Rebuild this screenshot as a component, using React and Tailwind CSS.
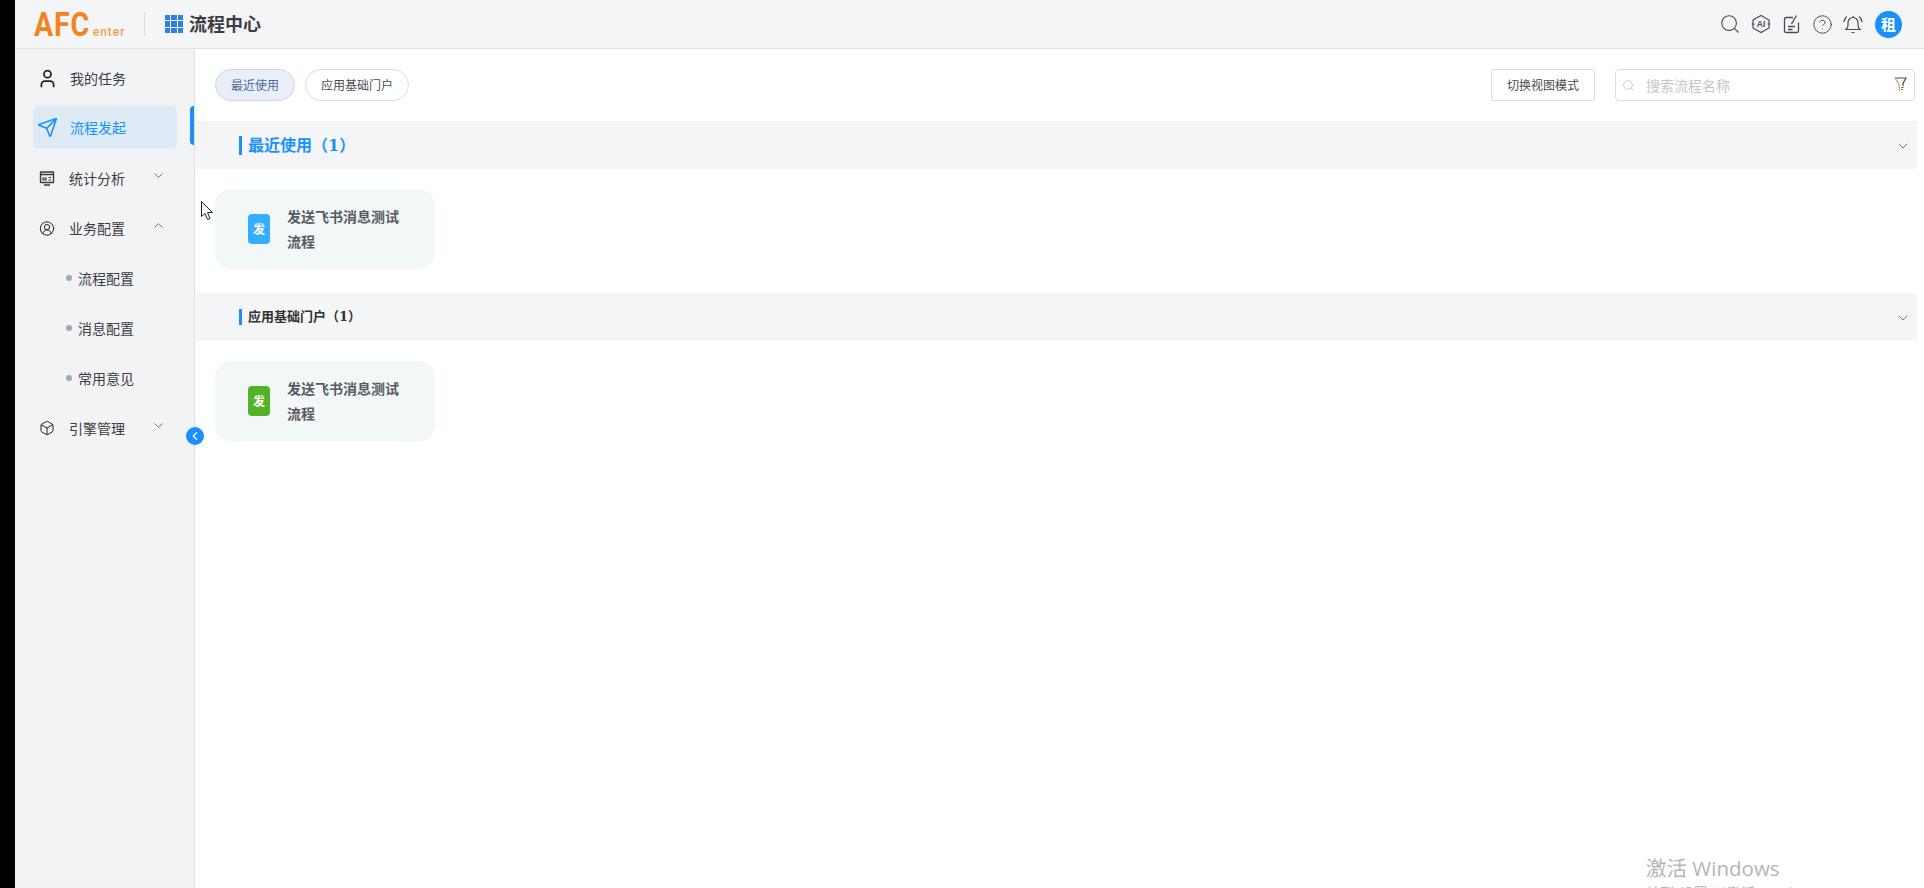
import React from 'react';
import { ChevronDown, ChevronUp, ChevronLeft, User, Send, CircleUserRound, Box, Search, CircleHelp } from 'lucide-react';

const navItems = [
  { label: '统计分析', icon: 'stats', chevron: 'down' },
  { label: '业务配置', icon: 'user', chevron: 'up' },
];

const subItems = ['流程配置', '消息配置', '常用意见'];

const StatsIcon = () => (
  <svg width="16" height="16" viewBox="0 0 16 16" fill="none" stroke="#3a3a3a" strokeWidth="1.4">
    <rect x="1.500" y="2" width="13" height="10.500" rx="0.500" />
    <path d="M1 4.500h14M5 15h6" />
    <path d="M4 8h3v2H4zM9.500 7.500h2.500M9.500 10h2.500" strokeWidth="1.200" />
  </svg>
);

const AiIcon = () => (
  <svg width="22" height="22" viewBox="0 0 22 22" fill="none" stroke="#4b4b55" strokeWidth="1.200">
    <path d="M3 7 11 2.500 19 7v8l-8 4.500L3 15z" />
    <path d="M1.500 11h3M17.500 11h3" />
    <text x="11" y="14" textAnchor="middle" fontSize="8.500" fontWeight="700" fill="#4b4b55" stroke="none" fontFamily="Liberation Sans">AI</text>
  </svg>
);

const NoteIcon = () => (
  <svg width="22" height="22" viewBox="0 0 22 22" fill="none" stroke="#4b4b55" strokeWidth="1.300">
    <path d="M12 4.500H5a1.500 1.500 0 0 0-1.500 1.500v12A1.500 1.500 0 0 0 5 19.500h11a1.500 1.500 0 0 0 1.500-1.500V9.500" />
    <path d="M10.500 11 15.500 2.500" />
    <path d="M7 13.500h7M7 16.500h4.500" />
  </svg>
);

const BellIcon = () => (
  <svg width="22" height="22" viewBox="0 0 22 22" fill="none" stroke="#4b4b55" strokeWidth="1.200">
    <path d="M4 16.500c1.500-1 2-2.200 2-4.500V9.500a5 5 0 0 1 10 0V12c0 2.300.5 3.500 2 4.500z" />
    <path d="M9.500 19.500h3M11 3v1.500M2 9c.2-2.200 1.100-3.900 2.800-5.500M20 9c-.2-2.200-1.100-3.900-2.800-5.500" />
  </svg>
);

const FilterIcon = () => (
  <svg width="13" height="15" viewBox="0 0 13 15" fill="none" strokeWidth="1.200">
    <path d="M1 1h11L9 6.500V9" stroke="#4b4b55" />
    <path d="M1 1l3.500 5.500 1.500 7.500" stroke="#e2953f" />
    <path d="M7.500 10.500h2M7.500 12.500h1.500" stroke="#4b4b55" />
  </svg>
);

const GridIcon = () => (
  <div className="grid grid-cols-3 gap-[1px] w-[18px] h-[18px]">
    {Array.from({ length: 9 }).map((_, i) => (
      <span key={i} className="bg-[#2f80e0]" />
    ))}
  </div>
);

const Section = ({ name, titleClass, accentClass, iconClass }) => (
  <div className="mb-[24px]">
    <div className="h-[48px] bg-[#f4f5f7] flex items-center justify-between pl-[44px] pr-[6px]">
      <div className="flex items-center">
        <span className={`w-[3px] bg-[#1890ff] mr-[6px] ${accentClass}`} />
        <span className={`font-bold pb-[1px] ${titleClass}`}>
          {name}（<span className="font-['DejaVu_Serif',serif]">1</span>）
        </span>
      </div>
      <ChevronDown size={16} strokeWidth={1} className="text-[#333] mt-[1px]" />
    </div>
    <div className="pl-[20px] pt-[20px]">
      <div className="w-[220px] h-[80px] rounded-[16px] bg-[#f2f7f8] flex items-center pl-[33px]">
        <div className={`w-[22px] h-[30px] rounded-[4px] flex items-center justify-center text-white text-[12px] font-bold shrink-0 pb-[1px] ${iconClass}`}>
          发
        </div>
        <div className="ml-[17px] w-[120px] text-[14px] leading-[25px] font-bold text-[#5a5a62] pb-[1px]">
          发送飞书消息测试流程
        </div>
      </div>
    </div>
  </div>
);

export default function App() {
  return (
    <div className="relative flex h-[888px] w-[1924px] overflow-hidden bg-white font-['Noto_Sans_CJK_SC','Noto_Sans',sans-serif]">
      <div className="w-[15px] bg-black shrink-0" />

      <div className="flex-1 flex flex-col min-w-0">
        <header className="h-[49px] shrink-0 bg-[#f4f5f7] border-b border-[#dfe1e4] flex items-center">
          <div className="w-[129px] pl-[19px] flex items-baseline font-['Roboto',sans-serif] leading-none">
            <span className="inline-block mr-[-8px] origin-left scale-x-[0.84] text-[34px] font-bold tracking-[1px] text-[#f58220] whitespace-nowrap">AFC</span>
            <span className="text-[12px] font-medium tracking-[1px] text-[#f5a04a]">enter</span>
          </div>
          <span className="w-px h-[24px] bg-[#dcdde0]" />
          <div className="ml-[20px]">
            <GridIcon />
          </div>
          <span className="ml-[6px] text-[18px] leading-none font-bold text-[#3c3c44] pb-[2px]">流程中心</span>
          <div className="ml-auto flex items-center gap-[9px] pr-[22px]">
            <Search size={22} strokeWidth={1.200} className="text-[#4b4b55]" />
            <AiIcon />
            <NoteIcon />
            <CircleHelp size={21} strokeWidth={1.100} className="text-[#4b4b55]" />
            <BellIcon />
            <div className="ml-[2px] w-[27px] h-[27px] rounded-full bg-[#1890ff] text-white text-[15px] font-bold flex items-center justify-center">
              租
            </div>
          </div>
        </header>

        <div className="flex-1 flex min-h-0">
          <aside className="relative w-[180px] shrink-0 bg-[#f2f3f5] border-r border-[#dfe1e4] pt-[4px] text-[14px] text-[#3c3c44]">
            <div className="h-[50px] flex items-center pl-[22px]">
              <User size={21} strokeWidth={2} className="text-[#222]" />
              <span className="ml-[12px]">我的任务</span>
            </div>
            <div className="relative h-[50px] flex items-center">
              <div className="ml-[18px] mb-[2px] w-[144px] h-[43px] rounded-[6px] bg-[#deeaf6] flex items-center pl-[4px] text-[#1890ff]">
                <Send size={21} strokeWidth={1.800} />
                <span className="ml-[12px]">流程发起</span>
              </div>
              <span className="absolute right-0 top-[3px] w-[4px] h-[39px] rounded-l-[4px] bg-[#1890ff]" />
            </div>
            {navItems.map((item) => (
              <div key={item.label} className="h-[50px] flex items-center pl-[24px] pr-[28px]">
                <span className="w-[16px] flex justify-center">
                  {item.icon === 'stats' ? <StatsIcon /> : <CircleUserRound size={17} strokeWidth={1.500} className="text-[#222]" />}
                </span>
                <span className="ml-[14px]">{item.label}</span>
                <span className="ml-auto mb-[5px]">
                  {item.chevron === 'down' ? (
                    <ChevronDown size={15} strokeWidth={1.100} />
                  ) : (
                    <ChevronUp size={15} strokeWidth={1.100} />
                  )}
                </span>
              </div>
            ))}
            {subItems.map((label) => (
              <div key={label} className="h-[50px] flex items-center pl-[51px]">
                <span className="w-[6px] h-[6px] rounded-full bg-[#a5a5b0]" />
                <span className="ml-[6px]">{label}</span>
              </div>
            ))}
            <div className="h-[50px] flex items-center pl-[24px] pr-[28px]">
              <span className="w-[16px] flex justify-center">
                <Box size={16} strokeWidth={1.500} className="text-[#222]" />
              </span>
              <span className="ml-[14px]">引擎管理</span>
              <span className="ml-auto mb-[5px]">
                <ChevronDown size={15} strokeWidth={1.100} />
              </span>
            </div>
            <div className="absolute right-[-10px] top-[378px] w-[18px] h-[18px] rounded-full bg-[#1890ff] flex items-center justify-center text-white z-10">
              <ChevronLeft size={14} strokeWidth={2} />
            </div>
          </aside>

          <main className="flex-1 min-w-0 pr-[7px]">
            <div className="pt-[20px] pb-[20px] pl-[20px] pr-[2px] flex items-center h-[72px]">
              <div className="h-[32px] px-[15px] rounded-full border border-[#c9d7f0] bg-[#e9eef8] text-[#4a6a9c] text-[12px] flex items-center">
                最近使用
              </div>
              <div className="ml-[10px] h-[32px] px-[15px] rounded-full border border-[#dcdde0] text-[#4b4b55] text-[12px] flex items-center">
                应用基础门户
              </div>
              <div className="ml-auto h-[32px] w-[104px] rounded-[2px] border border-[#dcdde0] text-[#4b4b55] text-[12px] flex items-center justify-center">
                切换视图模式
              </div>
              <div className="ml-[20px] h-[32px] w-[300px] rounded-[4px] border border-[#dcdde0] flex items-center pl-[6px] pr-[7px]">
                <Search size={13} strokeWidth={1.200} className="text-[#b5b8bd]" />
                <span className="ml-[11px] text-[14px] text-[#c4c6ca]">搜索流程名称</span>
                <span className="ml-auto mb-[2px]">
                  <FilterIcon />
                </span>
              </div>
            </div>
            <Section name="最近使用" titleClass="text-[16px] text-[#1890ff]" accentClass="h-[19px]" iconClass="bg-[#36aeff]" />
            <Section name="应用基础门户" titleClass="text-[13px] text-[#333]" accentClass="h-[16px]" iconClass="bg-[#52b228]" />
          </main>
        </div>
      </div>

      {/* mouse pointer caught in the capture */}
      <svg className="absolute left-[201px] top-[201px]" width="14" height="20" viewBox="0 0 14 20" fill="#fff" stroke="#222" strokeWidth="1">
        <path d="M.5.5v15l3.500-3 2.500 6 2.500-1-2.500-6h5z" />
      </svg>

      {/* windows activation watermark */}
      <div className="absolute left-[1646px] top-[854px] text-[#b8b4b4] font-['Open_Sans','Noto_Sans_CJK_SC',sans-serif]">
        <div className="text-[20.500px] leading-[28px]">激活 Windows</div>
        <div className="text-[14px] leading-[20px] mt-[1px]">转到"设置"以激活 Windows。</div>
      </div>
    </div>
  );
}
